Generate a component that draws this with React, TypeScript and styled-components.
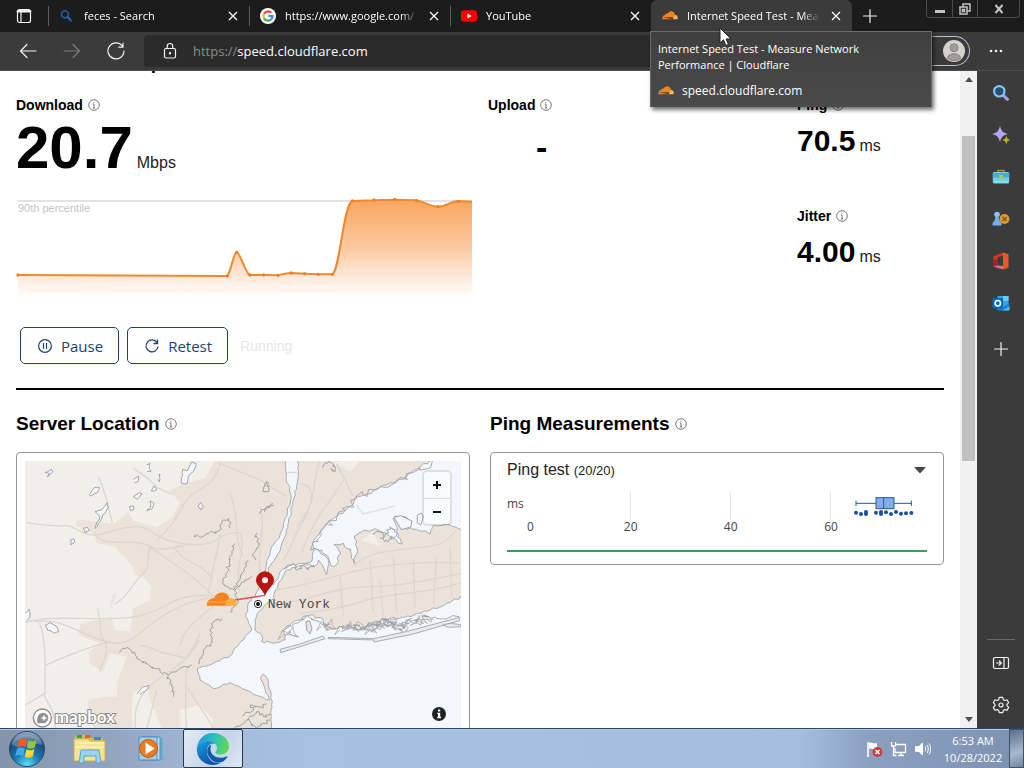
import React from "react";
import styled, { createGlobalStyle } from "styled-components";

const ui = `"Open Sans", "Noto Sans", sans-serif`;
const body = `"Liberation Sans", Arial, sans-serif`;

const GlobalStyle = createGlobalStyle`
  * { box-sizing: border-box; }
  body { margin: 0; background: #fff; font-family: ${body}; overflow: hidden; }
  button { font: inherit; color: inherit; background: none; border: 0; padding: 0; cursor: default; }
  h1, h2, h3, p { margin: 0; }
  svg { display: block; flex: none; }
`;

/* ---------- Window shell ---------- */

const Shell = styled.div`
  height: 100vh;
  display: flex;
  flex-direction: column;
`;

const TabStrip = styled.header`
  flex: none;
  height: 32px;
  display: flex;
  align-items: stretch;
  background: #1c1c1c;
  color: #fff;
  font-family: ${ui};
  font-size: 11px;
`;

const TabActions = styled.button`
  width: 48px;
  display: flex;
  align-items: center;
  justify-content: center;
`;

const Tabs = styled.div`
  display: flex;
  flex: 0 1 804px;
  min-width: 0;
`;

const TabItem = styled.div<{ $active?: boolean }>`
  position: relative;
  flex: 1 1 0;
  min-width: 0;
  display: flex;
  align-items: center;
  padding: 0 8px 0 10px;
  border-left: 1px solid ${(p) => (p.$active ? "#3b3b3b" : "transparent")};
  border-radius: ${(p) => (p.$active ? "6px 6px 0 0" : "0")};
  background: ${(p) => (p.$active ? "#3b3b3b" : "transparent")};

  &::before {
    content: "";
    position: absolute;
    left: -1px;
    top: 6px;
    height: 20px;
    width: 1px;
    background: ${(p) => (p.$active ? "transparent" : "#5a5a5a")};
  }
`;

const TabButton = styled.button`
  flex: 1;
  min-width: 0;
  display: flex;
  align-items: center;
  gap: 9px;
`;

const TabTitle = styled.span`
  flex: 1;
  text-align: left;
  white-space: nowrap;
  overflow: hidden;
  line-height: 20px;
  mask-image: linear-gradient(to right, #000 calc(100% - 18px), transparent);
`;

const CloseButton = styled.button`
  flex: none;
  width: 16px;
  height: 16px;
  margin-left: 8px;
  display: grid;
  place-items: center;
`;

const NewTab = styled.button`
  width: 36px;
  display: grid;
  place-items: center;
`;

const WindowControls = styled.div`
  display: flex;
  align-self: flex-start;
  height: 18px;
  margin: 0 4px 0 auto;
  border: 1px solid #4a4a4a;
  border-top: 0;
  border-radius: 0 0 4px 4px;
`;

const WindowButton = styled.button<{ $wide?: boolean }>`
  width: ${(p) => (p.$wide ? 42 : 25)}px;
  display: grid;
  place-items: center;
  & + & { border-left: 1px solid #4a4a4a; }
`;

const HoverCard = styled.div`
  position: absolute;
  z-index: 5;
  left: -2px;
  top: 31px;
  width: 282px;
  height: 76px;
  padding: 9px 7px;
  border: 1px solid #6c6c6c;
  border-bottom-color: #4a4a4a;
  background: linear-gradient(#3f3f3f, #4a4a4a);
  box-shadow: 2px 3px 4px rgba(0, 0, 0, 0.55);
  line-height: 16px;
`;

const HoverSite = styled.div`
  display: flex;
  align-items: center;
  gap: 8px;
  margin-top: 8px;
  font-size: 12px;
  line-height: 20px;
`;

const Cursor = styled.svg`
  position: absolute;
  z-index: 6;
  left: 67px;
  top: 27px;
`;

const Toolbar = styled.nav`
  flex: none;
  height: 39px;
  display: flex;
  align-items: center;
  padding: 0 6px;
  background: #3b3b3b;
  border-bottom: 1px solid #4e4e4e;
  font-family: ${ui};
`;

const NavButton = styled.button`
  width: 44px;
  height: 32px;
  display: grid;
  place-items: center;
`;

const AddressBar = styled.label`
  flex: 1;
  min-width: 0;
  height: 32px;
  margin-left: 6px;
  padding-left: 17px;
  display: flex;
  align-items: center;
  gap: 14px;
  border-radius: 4px 0 0 4px;
  background: #2b2b2b;
`;

const AddressField = styled.div`
  flex: 1;
  display: flex;
  font-size: 13px;
  line-height: 20px;
  color: #8c8c8c;
`;

const AddressInput = styled.input`
  flex: 1;
  min-width: 0;
  padding: 0;
  border: 0;
  outline: 0;
  background: none;
  color: #fff;
  font: inherit;
`;

const Profile = styled.button`
  width: 60px;
  height: 30px;
  display: flex;
  align-items: center;
  justify-content: flex-end;
  padding-right: 4px;
  border: 1px solid #b9c3d8;
  border-left: 0;
  border-radius: 0 15px 15px 0;
  background: #3b3b3b;
`;

const MenuButton = styled.button`
  width: 48px;
  height: 32px;
  padding-left: 4px;
  display: grid;
  place-items: center;
`;

const Main = styled.div`
  flex: 1;
  min-height: 0;
  display: flex;
`;

const Viewport = styled.main`
  flex: 1;
  min-width: 0;
  overflow: hidden;
  background: #fff;
  color: #000;
`;

const Page = styled.div`
  margin-top: -20px;
  padding: 0 16px;
`;

/* ---------- Page content ---------- */

const Heading = styled.h2`
  display: flex;
  align-items: center;
  gap: 5px;
  font-size: 19px;
  line-height: 24px;
  font-weight: 700;
  white-space: nowrap;
`;

const Metrics = styled.section`
  display: grid;
  grid-template-columns: 456fr 293fr 147fr;
  column-gap: 16px;
  margin-top: 20px;
`;

const Label = styled.h3`
  display: flex;
  align-items: center;
  gap: 5px;
  font-size: 14px;
  line-height: 20px;
  font-weight: 700;
`;

const BigValue = styled.p`
  font-size: 60px;
  line-height: 66px;
  font-weight: 700;
`;

const Unit = styled.span`
  margin-left: 4px;
  font-size: 16px;
  line-height: 16px;
  font-weight: 400;
  color: #222;
`;

const Value = styled.p`
  margin-top: 9px;
  font-size: 30px;
  line-height: 34px;
  font-weight: 700;
`;

const EmptyValue = styled.p`
  padding-left: 48px;
  margin-top: 12px;
  font-size: 34px;
  line-height: 40px;
  font-weight: 700;
`;

const SideMetrics = styled.div`
  display: flex;
  flex-direction: column;
  gap: 48px;
`;

const SpeedChart = styled.svg`
  width: 100%;
  height: auto;
  margin-top: 16px;
`;

const Controls = styled.div`
  display: flex;
  align-items: center;
  gap: 8px;
  padding-left: 4px;
  margin-top: 26px;
`;

const ActionButton = styled.button`
  height: 37px;
  padding: 0 15px 0 16px;
  display: flex;
  align-items: center;
  gap: 8px;
  border: 1px solid #1f4275;
  border-radius: 5px;
  color: #23436f;
  font-family: ${ui};
  font-size: 15px;
  line-height: 20px;
`;

const Status = styled.span`
  margin-left: 4px;
  font-size: 14px;
  color: #e6e6e6;
`;

const Rule = styled.hr`
  height: 2px;
  margin: 24px 0 22px;
  border: 0;
  background: #000;
`;

const Panels = styled.div`
  display: grid;
  grid-template-columns: 1fr 1fr;
  gap: 20px;
  align-items: start;
`;

const Card = styled.div<{ $pad: string }>`
  margin-top: 16px;
  padding: ${(p) => p.$pad};
  border: 1px solid #979797;
  border-radius: 4px;
`;

const MapFrame = styled.div`
  position: relative;
  height: 320px;
  overflow: hidden;
  background: #f3f6fa;
`;

const MapDrawing = styled.svg`
  width: 100%;
  height: auto;
`;

const ZoomGroup = styled.div`
  position: absolute;
  top: 11px;
  right: 11px;
  width: 26px;
  display: flex;
  flex-direction: column;
  border-radius: 3px;
  background: #fafbfc;
  box-shadow: 0 0 0 2px rgba(0, 0, 0, 0.09);
`;

const ZoomButton = styled.button`
  height: 26px;
  display: grid;
  place-items: center;
  & + & { border-top: 1px solid #ddd; }
`;

const MapInfo = styled.button`
  position: absolute;
  right: 15px;
  top: 246px;
`;

const TestToggle = styled.button`
  width: 100%;
  display: flex;
  align-items: center;
  justify-content: space-between;
  font-size: 16px;
  line-height: 20px;
  color: #222;

  small {
    font-size: 13px;
    line-height: 16px;
  }
`;

const BoxPlot = styled.svg`
  width: 100%;
  height: auto;
  margin-top: 4px;
`;

const Progress = styled.div`
  height: 2px;
  margin-top: 10px;
  background: #2ea355;
`;

/* ---------- Scroll bar and side bar ---------- */

const ScrollTrack = styled.div`
  flex: none;
  width: 17px;
  display: flex;
  flex-direction: column;
  align-items: center;
  background: #f1f1f1;
`;

const ScrollArrow = styled.button`
  width: 17px;
  height: 17px;
  display: grid;
  place-items: center;
`;

const ScrollPart = styled.div<{ $grow: number; $thumb?: boolean }>`
  flex: ${(p) => p.$grow} 0 0;
  width: 13px;
  background: ${(p) => (p.$thumb ? "#c1c1c1" : "transparent")};
`;

const SideBar = styled.aside`
  flex: none;
  width: 47px;
  display: flex;
  flex-direction: column;
  align-items: center;
  padding: 1px 0 2px;
  background: #3b3b3b;
`;

const SideButton = styled.button<{ $last?: boolean }>`
  width: 47px;
  height: 42px;
  margin-top: ${(p) => (p.$last ? 4 : 0)}px;
  display: grid;
  place-items: center;
`;

const SideDivider = styled.div`
  width: 28px;
  height: 1px;
  margin: auto 0 2px;
  background: #6a6a6a;
`;

/* ---------- Task bar ---------- */

const TaskBar = styled.footer`
  flex: none;
  height: 40px;
  display: flex;
  align-items: stretch;
  border-top: 1px solid #2c4668;
  background: linear-gradient(to right, #8494ab 0, #93a6c2 12%, #a3b9d8 20%, #a9c0e0 30%, #a6bede 78%, #8ba0bf 85%, #7d92b0 100%);
  box-shadow: inset 0 1px 0 #b7cae4;
`;

const TaskButton = styled.button<{ $open?: boolean }>`
  width: ${(p) => (p.$open ? 60 : 62)}px;
  display: grid;
  place-items: center;
  border: ${(p) => (p.$open ? "1px solid #24384f" : "0")};
  border-radius: 2px;
  background: ${(p) => (p.$open ? "linear-gradient(120deg, #e3ebf5, #c3d3e8 60%, #dfe8f3)" : "none")};
`;

const StartButton = styled.button`
  width: 54px;
  margin-right: 5px;
  display: grid;
  place-items: center;
`;

const Tray = styled.div`
  margin-left: auto;
  display: flex;
  align-items: center;
  gap: 7px;
`;

const Clock = styled.time`
  width: 64px;
  margin: 1px 4px 0 3px;
  text-align: center;
  font-family: ${ui};
  font-size: 11px;
  line-height: 17px;
  color: #fff;
  white-space: pre-line;
`;

const ShowDesktop = styled.button`
  width: 15px;
  border: 1px solid #3e526d;
  background: linear-gradient(160deg, #5c6e87, #a9b9cd 60%, #71849f);
`;

/* ---------- Icons ---------- */

const CloudIcon = () => (
  <svg width="16" height="16" viewBox="0 0 32 32">
    <path fill="#f0831e" d="M21.6 22.5 22 21c.4-1.4-.6-2.3-2-2.4L1.2 18.4c.4-2.8 2.6-4.6 5.2-4.6.2-2.4 2.8-3.8 5-2.5C13 7.3 16.5 6 19 6.300c4 .4 6.600 3.700 7.100 7.500l-2.700 8.700H.6c-.4-1.400-.2-3 .6-4.100z" />
    <path fill="#fbb45c" d="M26.100 13.800c3.300 0 5.500 2.600 5.500 5.700 0 1-.2 2.100-.5 3h-8.600c1.200-2.200.7-5 2.200-8.200z" />
  </svg>
);

const Close = () => (
  <svg width="10" height="10" viewBox="0 0 10 10" stroke="#fff" strokeWidth="1.300">
    <path d="M1 1l8 8M9 1L1 9" />
  </svg>
);

const Info = () => (
  <svg width="12" height="12" viewBox="0 0 12 12" fill="none" stroke="#555" strokeWidth=".8">
    <circle cx="6" cy="6" r="5.300" />
    <path d="M6 5v4M4.800 5H6M4.800 9h2.400M6 2.700v1.100" />
  </svg>
);

const BingSearch = () => (
  <svg width="16" height="16" viewBox="0 0 16 16" fill="none">
    <circle cx="6" cy="6.300" r="3.500" stroke="#1d5a9c" strokeWidth="1.700" />
    <path d="M8.700 9l3.300 3.600" stroke="#1d6fc0" strokeWidth="2" strokeLinecap="round" />
  </svg>
);

const GoogleIcon = () => (
  <svg width="16" height="16" viewBox="0 0 16 16" fill="none">
    <circle cx="8" cy="8" r="8" fill="#fff" />
    <g strokeWidth="2.200">
      <path d="M11.300 4.800A4.600 4.600 0 0 0 4 5.800" stroke="#ea4335" />
      <path d="M4 5.800a4.600 4.600 0 0 0 0 4.400" stroke="#fbbc05" />
      <path d="M4 10.200a4.600 4.600 0 0 0 7 1.300" stroke="#34a853" />
      <path d="M11 11.500A4.600 4.600 0 0 0 12.600 8H8.300" stroke="#4285f4" />
    </g>
  </svg>
);

const YouTubeIcon = () => (
  <svg width="16" height="16" viewBox="0 0 16 16">
    <rect y="2.300" width="16" height="11.400" rx="3" fill="#f00" />
    <path d="M6.400 5.500v5l4.300-2.500z" fill="#fff" />
  </svg>
);

const ToolIcon = ({ kind }: { kind: string }) => (
  <svg width="18" height="18" viewBox="0 0 18 18" fill="none" stroke={kind === "forward" ? "#7b7b7b" : "#f2f2f2"} strokeWidth="1.200" strokeLinecap="round" strokeLinejoin="round">
    {kind === "back" && <path d="M17 9H1.500M8 2.500L1.500 9 8 15.500" />}
    {kind === "forward" && <path d="M1 9h15.500M10 2.500L16.500 9 10 15.500" />}
    {kind === "refresh" && <path d="M15.500 4.200A8 8 0 1 0 17 9M16 1v4.200h-4.200" />}
    {kind === "lock" && <><rect x="3.500" y="6.500" width="11" height="9.500" rx="1.500" /><path d="M6.200 6.500V4.300a2.800 2.800 0 0 1 5.600 0v2.200" /><circle cx="9" cy="11.300" r=".6" fill="#fff" /></>}
    {kind === "tabs" && <><rect x="2.500" y="2.500" width="13" height="13" rx="2" /><path d="M3 4.200h12" strokeWidth="2.600" /><path d="M6 4v11.500" /></>}
    {kind === "plus" && <path d="M9 2.500v13M2.500 9h13" />}
    {kind === "panel" && <><rect x="1.500" y="3.500" width="15" height="11" rx="1.500" /><path d="M12 3.500v11M4.500 9H9M7.300 7L9.300 9l-2 2" /></>}
    {kind === "gear" && <><circle cx="9" cy="9" r="2" /><path d="M7.300 1.400h3.400l.6 2.300 1.400.8 2.300-.7 1.700 2.900-1.700 1.700v1.300l1.700 1.700-1.700 2.900-2.300-.7-1.400.8-.6 2.300H7.300l-.6-2.300-1.400-.8-2.300.7-1.700-2.900L3 9.700V8.400L1.300 6.700 3 3.800l2.300.7 1.400-.8z" /></>}
  </svg>
);

const SideIcon = ({ kind }: { kind: string }) => (
  <svg width="18" height="18" viewBox="0 0 18 18">
    {kind === "search" && <><path d="M11.300 11.300l4.200 4" stroke="#a99af0" strokeWidth="3" strokeLinecap="round" /><circle cx="7.300" cy="7.300" r="5.200" fill="#26506c" stroke="#85c6f2" strokeWidth="2.200" /></>}
    {kind === "discover" && <><path d="M8 0c1.500 5 2.500 6.500 8 8-5.500 1.500-6.500 3-8 8-1.500-5-2.500-6.500-8-8 5.500-1.500 6.500-3 8-8z" fill="#b7a1f5" /><path d="M14.300 10.500c.5 2.300 1 3 3.200 3.500-2.200.5-2.700 1.200-3.200 3.500-.5-2.300-1-3-3.200-3.500 2.200-.5 2.700-1.200 3.200-3.500z" fill="#c9b82c" stroke="#c9b82c" strokeWidth=".6" /></>}
    {kind === "tools" && <><path d="M6 4.500v-2h6v2" fill="none" stroke="#a8862d" strokeWidth="1.500" /><rect x=".8" y="4" width="16.400" height="11.500" rx="1.500" fill="#6fd0e8" /><path d="M.8 5h16.400v4.500H.8z" fill="#48acd0" /><path d="M2 13h14v1.500H2z" fill="#8ae4ee" /><rect x="7.300" y="7" width="3.800" height="4" rx=".6" fill="#b9c24e" /></>}
    {kind === "games" && <><circle cx="12.500" cy="9" r="5" fill="#d99a2b" /><path d="M10.500 7l4 4M14.500 7l-4 4" stroke="#8a5410" strokeWidth="1.200" /><circle cx="5" cy="4.600" r="2.800" fill="#8ec4f5" /><path d="M3.300 6.500h3.400c0 3 .8 4.500 2.800 6.500v2.500H.5V13c2-2 2.800-3.500 2.800-6.500z" fill="#73aef0" /></>}
    {kind === "office" && <><path d="M11 .5l5.500 1.700v13.600L11 17.500z" fill="#f0591d" /><path d="M11 .5v3.200L5.600 5.200v8L1.500 14.700V4.300z" fill="#d8391e" /><path d="M1.500 14.700l4.100-1.500L11 14v3.500z" fill="#dd6d86" /><path d="M1.500 8v6.700l4.100-1.500V7z" fill="#a22434" /></>}
    {kind === "outlook" && <><path d="M5.500 2h11v13h-11z" fill="#2fa5e8" /><path d="M11 2h5.500v5H11z" fill="#63ccf5" /><path d="M5.500 10l6 3 6-4v6.500a1 1 0 0 1-1 1h-11z" fill="#1b80cd" /><path d="M10 16.500l7.500-4v3a1 1 0 0 1-1 1z" fill="#4abdf0" /><rect x=".5" y="4" width="10.500" height="10.500" rx="1" fill="#0967b8" /><circle cx="5.800" cy="9.200" r="2.700" fill="none" stroke="#fff" strokeWidth="1.600" /></>}
  </svg>
);

const Avatar = () => (
  <svg width="22" height="22" viewBox="0 0 22 22">
    <circle cx="11" cy="11" r="11" fill="#d4d2cf" />
    <circle cx="11" cy="7.800" r="4" fill="#a09d99" stroke="#77736f" strokeWidth=".7" />
    <path d="M4.500 18.500c-.5-6.500 13.500-6.500 13 0a11 11 0 0 1-13 0z" fill="#a09d99" stroke="#77736f" strokeWidth=".7" />
  </svg>
);

const StartOrb = () => (
  <svg width="38" height="38" viewBox="0 0 38 38">
    <defs>
      <radialGradient id="orb" cx=".5" cy=".95" r=".95">
        <stop offset="0" stopColor="#5fe0f5" />
        <stop offset=".4" stopColor="#1878ae" />
        <stop offset=".75" stopColor="#1d4a79" />
        <stop offset="1" stopColor="#a3bbd0" />
      </radialGradient>
    </defs>
    <circle cx="19" cy="19" r="17.500" fill="url(#orb)" stroke="#2a4766" />
    <path d="M4 15C6 1 32 1 34 15c-9-4-20 5-30 0z" fill="#fff" opacity=".25" />
    <path d="M11 10c3-2 5-2 8-.3l-1.700 7.500c-3-1.500-5-1.400-7.900.2z" fill="#ee5a24" />
    <path d="M20.300 10.300c3 1.500 5 1.400 8.300-.3l-1.800 7.500c-3 1.700-5 1.600-8 .2z" fill="#8cc63f" />
    <path d="M9 18.800c3-1.700 5-1.600 7.900-.2l-1.800 7.600c-3-1.600-5-1.500-8 .2z" fill="#3fa9f5" />
    <path d="M18.400 19.200c3 1.500 5 1.400 8-.2l-1.700 7.500c-3 1.700-5 1.600-8 .2z" fill="#ffd33c" />
  </svg>
);

const ExplorerIcon = () => (
  <svg width="34" height="32" viewBox="0 0 34 32">
    <path d="M2 4l2-2h11l2 3h13v22H2z" fill="#d9bd58" />
    <path d="M4 2h5v3H4z" fill="#3aa23d" /><path d="M12 2h5v3h-5z" fill="#d8603a" /><path d="M21 4h7v3h-7z" fill="#4286c9" />
    <path d="M1 6h14l2 2h15v20H1z" fill="#f5e292" stroke="#c7a945" strokeWidth=".8" />
    <path d="M2 10h29M2 14h29" stroke="#fff4bd" strokeWidth="1.500" />
    <path d="M6 30l2-13h18l2 13h-5v-7H11v7z" fill="#9bd4ee" stroke="#5aa3cf" strokeWidth="1" />
  </svg>
);

const MediaIcon = () => (
  <svg width="30" height="28" viewBox="0 0 30 28">
    <path d="M10 3h16v20l2 2-16 1z" fill="#6fabcc" />
    <path d="M6 2h17v23H6z" fill="#bcdcf0" stroke="#4a91ba" />
    <path d="M2 2h18v23H2z" fill="#a5cde8" stroke="#4a91ba" />
    <circle cx="11.500" cy="13.500" r="9" fill="#ec7a23" stroke="#c9570f" />
    <path d="M8.500 7.500v12l9-6z" fill="#fff" />
  </svg>
);

const EdgeIcon = () => (
  <svg width="34" height="34" viewBox="0 0 34 34">
    <defs>
      <linearGradient id="edgeTop" x1="0" y1=".3" x2="1" y2=".5">
        <stop offset="0" stopColor="#2296d6" />
        <stop offset=".5" stopColor="#2bc0c0" />
        <stop offset="1" stopColor="#62d84e" />
      </linearGradient>
      <linearGradient id="edgeLeft" x1="0" y1="0" x2=".6" y2="1">
        <stop offset="0" stopColor="#1b9de2" />
        <stop offset="1" stopColor="#0b4fa4" />
      </linearGradient>
    </defs>
    <path d="M1 16C2 7 8.500 1 17 1c9.500 0 16 6.500 16 13.500 0 5-4 8-8.500 8-4 0-5.500-1.500-5-2.500 1-1.500 1.500-2.500 1.500-4C21 12 17 9 12 9 6 9 2 12 1 16z" fill="url(#edgeTop)" />
    <path d="M1 16c1-4 5-7 11-7 3 0 6 1 7.500 3-5-2-8.500 2-8.500 7 0 7 5 13 13 12-2 1.300-4.500 2-7 2C7 33 0 25 1 16z" fill="url(#edgeLeft)" />
    <path d="M15.500 12.500C11 14 10 20 13 25s9 7 13 5c2.500-1.300 4.300-3.200 5.300-5 .4-.8-.3-1-1-.6C23 28 15 24 14.500 18c-.2-2 .3-4 1-5.500z" fill="#0d5ca9" />
  </svg>
);

const FlagIcon = () => (
  <svg width="17" height="18" viewBox="0 0 17 18">
    <path d="M2 17V2" stroke="#fff" strokeWidth="1.600" />
    <path d="M3 3c3-1.500 4 1.500 8 0v6c-4 1.500-5-1.500-8 0z" fill="#fff" />
    <circle cx="11.500" cy="12" r="5" fill="#d23b3b" />
    <path d="M9.500 10l4 4M13.500 10l-4 4" stroke="#fff" strokeWidth="1.600" />
  </svg>
);

const NetworkIcon = () => (
  <svg width="17" height="18" viewBox="0 0 17 18" fill="none" stroke="#fff" strokeWidth="1.300">
    <path d="M6 4.500h9.500v8H5V8M8 15.500h6M11 12.500v3" />
    <path d="M1.500 2v4h4V2M3.500 6v9.500h3" />
  </svg>
);

const SpeakerIcon = () => (
  <svg width="17" height="18" viewBox="0 0 17 18" fill="none" stroke="#fff" strokeWidth="1">
    <path d="M1.500 6.500h3v5h-3zM5.500 6l3-3v12l-3-3z" fill="#fff" />
    <path d="M11 6.500c1 1.500 1 3.500 0 5M13 5c1.800 2.500 1.800 5.500 0 8M15 3.500c2.200 3.500 2.200 7.500 0 11" />
  </svg>
);

/* ---------- Map drawing ---------- */

type Point = [number, number];

const toPoints = (s: string): Point[] =>
  s.trim().split(/\s+/).map((p) => p.split(",").map(Number) as Point);

/* Adds repeatable small bends between the points of a coast line. */
const roughen = (s: string, amount: number, step = 9) => {
  const pts = toPoints(s);
  let seed = 7;
  const rnd = () => {
    seed = (seed * 16807) % 2147483647;
    return seed / 2147483647 - 0.5;
  };
  const out: Point[] = [pts[0]];
  for (let i = 1; i < pts.length; i++) {
    const [ax, ay] = pts[i - 1];
    const [bx, by] = pts[i];
    const steps = Math.max(1, Math.round(Math.hypot(bx - ax, by - ay) / step));
    for (let k = 1; k <= steps; k++) {
      const t = k / steps;
      const a = k === steps ? 0 : amount;
      out.push([ax + (bx - ax) * t + rnd() * a, ay + (by - ay) * t + rnd() * a]);
    }
  }
  return "M" + out.map(([x, y]) => `${x.toFixed(1)} ${y.toFixed(1)}`).join("L");
};

const westLand =
  "60,170 855,170 858,240 870,262 872,300 862,340 840,405 812,450 798,500 778,560 768,580 745,608 738,650 755,690 722,725 690,768 640,790 592,806 600,840 640,866 690,848 720,862 770,886 808,900 796,870 782,832 790,822 800,832 808,866 817,905 812,940 815,1020 60,1020 60,170";
const northLand =
  "895,170 893,240 880,300 870,350 855,410 835,460 805,505 800,540 820,555 838,520 870,495 905,490 935,485 942,450 937,430 960,395 990,362 1012,348 1060,312 1066,292 1110,282 1150,256 1210,238 1240,212 1290,183 1300,170 895,170";
const longIsland =
  "822,590 838,545 860,510 895,497 925,492 942,500 956,480 972,505 980,524 987,492 978,470 940,445 965,450 1000,500 1010,494 1022,462 1002,434 1030,430 1052,448 1063,490 1070,440 1064,408 1092,390 1130,388 1160,402 1195,430 1207,432 1190,395 1182,352 1220,352 1235,370 1215,384 1250,388 1290,402 1300,376 1340,372 1390,388 1390,588 1350,608 1290,630 1230,650 1170,655 1130,665 1090,690 1030,680 980,692 970,660 930,645 880,665 850,690 855,720 820,730 785,725 785,705 765,690 765,660 772,640 800,612 822,590";

const ruralAreas = [
  "60,170 650,170 615,235 560,250 505,272 540,305 518,352 470,382 400,362 385,335 340,372 232,358 228,378 285,404 290,430 345,440 392,492 405,525 430,530 455,560 450,600 400,625 390,695 345,690 330,640 350,575 335,590 330,650 240,672 235,705 300,730 265,755 268,790 310,815 330,760 380,770 350,850 352,890 310,890 262,900 270,960 300,1020 60,1020",
  "400,880 440,850 450,900 500,1020 400,1020 395,930",
  "540,930 600,915 640,960 620,1020 540,1020",
  "1000,185 1080,183 1050,215",
  "1085,420 1120,395 1140,440",
];

const roads = [
  "M78 368C130 375 170 380 195 377S240 402 275 405 340 385 400 380 450 420 560 432 640 395 720 398",
  "M280 400C320 450 380 410 440 435S500 440 560 435",
  "M400 205L440 232 470 262 515 283M295 230C320 280 325 330 338 370",
  "M660 190C640 270 590 260 560 300S530 370 470 420M660 190L720 215 780 240 860 290",
  "M450 440C440 480 450 510 425 525 390 560 385 590 345 612",
  "M75 668C130 650 200 655 290 656S430 655 500 615 600 590 690 585",
  "M105 665C180 655 220 690 300 720 400 750 400 700 500 640L560 610 640 590",
  "M292 625C310 690 290 700 318 730 325 780 300 790 300 815",
  "M135 797C200 765 250 750 318 727M118 668C140 720 135 800 135 880L60 925M130 880L160 940 170 1000",
  "M440 435C540 500 620 560 650 600M520 440C560 500 600 480 640 540M660 400C655 460 640 480 625 580",
  "M540 740C545 690 600 650 640 620M418 740C440 730 470 760 520 765L560 775 600 720",
  "M410 1000C400 950 400 900 460 850S560 800 600 700M560 1000C555 930 555 880 560 800M560 860C600 920 620 950 650 1000M440 990L470 870",
  "M720 400C740 440 700 520 720 580M690 280C720 350 700 420 730 470M780 320C800 390 770 430 780 520",
  "M900 250C960 260 930 330 900 380S880 440 850 480M960 183C930 250 960 300 890 380M1010 190L1060 290M1030 240C1000 300 950 330 905 460",
  "M830 570C900 560 1000 530 1060 515S1250 480 1390 490M840 610C940 600 1000 560 1100 560S1280 540 1390 520",
  "M1020 530L1030 650M1110 480L1120 640M1140 540L1150 650M1180 470L1190 640M1240 480L1245 620M1310 470L1300 610M1350 440L1355 590",
  "M900 640C1000 630 1040 620 1100 600S1300 580 1390 545M1060 500C1100 450 1200 450 1280 440S1350 400 1370 390",
];

const lakes = [
  "135,218 155,208 158,216 142,231 148,220 135,218", "268,285 285,262 298,262 292,278 272,288 268,285",
  "285,385 300,350 285,335 305,330 322,308 325,322 308,345 300,365 285,385", "250,385 262,382 268,390 255,398 250,385",
  "212,420 222,416 224,426 212,434 212,420", "400,290 418,278 426,282 412,298 400,290", "440,330 452,322 450,303 462,310 455,328 440,333",
  "440,195 450,190 448,205 453,214 441,214", "476,225 480,222 478,245 474,238", "455,274 462,258 470,270 455,274",
  "545,250 548,208 562,212 575,186 588,190 580,215 568,225 562,250 545,250", "400,238 416,228 414,245 404,248",
  "136,675 150,668 168,678 176,695 162,700 142,690 136,675", "594,318 602,308 610,320 602,330 594,318",
  "412,882 430,860 446,856 440,870 420,884", "388,320 400,318 402,328 392,332 388,320", "76,640 88,628 90,650 80,662",
];

const creeks = [
  "585,403 600,412 620,400 655,395 665,365 685,355 690,385", "360,755 380,742 395,752 410,775 450,798 480,815 505,825 540,805 575,795",
  "505,825 515,860 520,890", "600,790 610,750 632,730 635,670 665,655", "705,430 690,470 680,520 668,550 690,568 710,560",
  "770,400 775,440 760,460 765,480", "745,480 725,520 715,545 705,570 712,610 690,635", "720,560 735,540 755,530",
  "795,335 810,318 822,315", "780,340 800,320 818,310", "970,200 985,185 1000,192 1005,215 990,205", "795,275 793,252 800,245 806,275 795,275",
  "1120,400 1145,395 1150,415 1170,380 1190,400 1165,425 1140,415", "855,505 880,490 890,510 910,495 925,510 940,495",
  "730,945 760,930 750,915 780,920 800,912", "745,960 770,935 790,950 810,940", "700,990 740,960 770,985 810,960",
];

const marshes = [
  "1020,690 1050,678 1080,685", "1075,672 1110,688 1140,672", "1110,690 1160,662 1190,682", "1160,664 1200,688 1225,668",
  "1225,672 1262,658 1290,652", "850,705 868,692 884,706", "965,678 985,668 995,682",
];

const MapArt = () => (
  <MapDrawing viewBox="75 183 1308 960" role="img" aria-label="Map of New York">
    <rect x="60" y="170" width="1340" height="990" fill="#f3f6fb" />
    <path d={roughen(westLand, 5)} fill="#ebe3da" />
    <path d={roughen(northLand, 6)} fill="#ebe3da" />
    <path d={roughen(longIsland, 8)} fill="#ebe3da" />
    {ruralAreas.map((a) => <polygon key={a} points={a} fill="#f2efeb" />)}
    <g fill="none" stroke="#dcd6d0" strokeWidth="4" strokeLinejoin="round">
      {roads.map((d) => <path key={d} d={d} />)}
    </g>
    <path d="M1070 315L1090 342 1185 318" fill="none" stroke="#dfe1e4" strokeWidth="4" />
    <g fill="none" stroke="#9b9fa5" strokeWidth="2.500" strokeLinejoin="round">
      <path d={roughen(westLand, 5)} />
      <path d={roughen(northLand, 6)} />
      <path d={roughen(longIsland, 8)} />
      <path d={roughen("940,448 962,392 1012,345 1058,315 1070,288 1150,262 1240,218 1298,183", 24)} />
      <path d={roughen("850,692 880,672 925,650 970,672 985,690", 18)} />
      <path d={roughen("1030,675 1080,690 1130,665 1190,675 1250,668 1310,655 1378,650", 22)} />
      {marshes.map((m) => <path key={m} d={roughen(m, 36, 3)} strokeWidth="2" />)}
      <path d="M858 217H890" stroke="#c9cdd3" />
    </g>
    <g fill="#e9eaeb" stroke="#9b9fa5" strokeWidth="2.500" strokeLinejoin="round">
      <path d="M840 748L900 732 968 708 975 716 900 740 842 758z" />
      <path d="M985 712L1120 716 1230 692 1378 652V662L1240 702 1122 726V720L985 716z" />
      <path d="M1328 675L1350 670 1383 674V680L1345 682z" />
    </g>
    <g fill="#f4f6f9" stroke="#8f959c" strokeWidth="2.500" strokeLinejoin="round">
      {lakes.map((l) => <path key={l} d={roughen(l, 5)} />)}
      <path d="M918 665l10 -3 8 22 -6 18 -10 -12z" fill="#ebe3da" />
      <path d="M1182 352l20 -5 34 16 -4 18 -28 8zM1252 345l12 -6 6 12 -8 24 -10 -6z" fill="#f3f6fb" />
    </g>
    <g fill="none" stroke="#8f959c" strokeWidth="2.500" strokeLinejoin="round">
      {creeks.map((c) => <path key={c} d={roughen(c, 12, 6)} />)}
    </g>
    <path d="M705 600L795 586" stroke="#d9534f" strokeWidth="4" />
    <path d="M620 617C620 602 630 596 642 594 652 572 682 572 688 594L692 617z" fill="#f6821f" />
    <path d="M688 594C706 594 713 606 710 617H672C680 610 682 598 688 594z" fill="#fbad41" />
    <path d="M625 606H676L688 600" fill="none" stroke="#ffc48a" strokeWidth="2" />
    <circle cx="774" cy="612" r="11" fill="#fff" stroke="#333" strokeWidth="3" />
    <circle cx="774" cy="612" r="6" fill="#111" />
    <path d="M795 587C785 565 768 556 768 541A27 27 0 0 1 822 541C822 556 805 565 795 587z" fill="#b91414" />
    <circle cx="795" cy="541" r="9" fill="#fff" />
    <text x="803" y="624" fontFamily="'Liberation Mono', monospace" fontSize="39" fill="#4a4a4a">New York</text>
    <circle cx="127" cy="954" r="27" fill="#fff" stroke="#8a8a8a" strokeWidth="4" />
    <path d="M112 970C110 950 116 938 130 938A16 16 0 1 1 128 970z" fill="#8f8f8f" />
    <path d="M132 944l3 7 7 3-7 3-3 7-3-7-7-3 7-3z" fill="#fff" />
    <text x="164" y="968" fontFamily="Lato, sans-serif" fontWeight="700" fontSize="51" fill="#fff" stroke="#8a8a8a" strokeWidth="6" paintOrder="stroke">mapbox</text>
  </MapDrawing>
);

const downloadLine =
  "M54 555L682 558C695 540 700 487 710 487C722 487 735 552 750 555L790 555L834 556C850 552 860 549 874 549L914 551L955 553L997 553C1020 540 1030 340 1057 333L1122 331Q1184 327 1249 331C1280 338 1290 350 1314 350C1340 350 1350 333 1375 333L1416 335";
const downloadDots = "54,555 682,558 710,487 750,555 791,555 834,556 874,549 914,551 955,553 997,553 1057,333 1122,330 1184,328 1249,332 1314,350 1375,334";
const pingDots = "1158,338 1173,342 1188,336 1188,342 1218,338 1233,336 1233,342 1248,337 1263,342 1278,336 1293,341 1308,340 1324,339";

const tabs = [
  { title: "feces - Search", icon: <BingSearch /> },
  { title: "https://www.google.com/", icon: <GoogleIcon /> },
  { title: "YouTube", icon: <YouTubeIcon /> },
  { title: "Internet Speed Test - Measure Network", icon: <CloudIcon />, active: true },
];

export default function App() {
  return (
    <Shell>
      <GlobalStyle />
      <TabStrip>
        <TabActions aria-label="Tab actions"><ToolIcon kind="tabs" /></TabActions>
        <Tabs>
          {tabs.map((t) => (
            <TabItem key={t.title} $active={t.active}>
              <TabButton>{t.icon}<TabTitle>{t.title}</TabTitle></TabButton>
              <CloseButton aria-label="Close tab"><Close /></CloseButton>
              {t.active && (
                <>
                  <HoverCard>
                    Internet Speed Test - Measure Network<br />Performance | Cloudflare
                    <HoverSite><CloudIcon />speed.cloudflare.com</HoverSite>
                  </HoverCard>
                  <Cursor width="13" height="20" viewBox="0 0 13 20">
                    <path d="M1 1v15l3.500-3.200 2.300 5.700 2.700-1.100-2.400-5.500H12z" fill="#fff" stroke="#222" />
                  </Cursor>
                </>
              )}
            </TabItem>
          ))}
        </Tabs>
        <NewTab aria-label="New tab"><ToolIcon kind="plus" /></NewTab>
        <WindowControls>
          <WindowButton aria-label="Minimize">
            <svg width="12" height="12" viewBox="0 0 12 12"><path d="M1 7h10v3H1z" fill="#c4c4c4" /></svg>
          </WindowButton>
          <WindowButton aria-label="Restore">
            <svg width="12" height="12" viewBox="0 0 12 12" fill="none" stroke="#c4c4c4" strokeWidth="1.500"><path d="M1 4h7v7H1zM4 4V1h7v7H8M3.500 6.500h2v2h-2z" /></svg>
          </WindowButton>
          <WindowButton $wide aria-label="Close window">
            <svg width="10" height="10" viewBox="0 0 10 10" stroke="#c4c4c4" strokeWidth="2"><path d="M1.500 1l7 8M8.500 1l-7 8" /></svg>
          </WindowButton>
        </WindowControls>
      </TabStrip>

      <Toolbar>
        <NavButton aria-label="Back"><ToolIcon kind="back" /></NavButton>
        <NavButton aria-label="Forward"><ToolIcon kind="forward" /></NavButton>
        <NavButton aria-label="Refresh"><ToolIcon kind="refresh" /></NavButton>
        <AddressBar>
          <ToolIcon kind="lock" />
          <AddressField>
            <span>https://</span>
            <AddressInput aria-label="Address" defaultValue="speed.cloudflare.com" />
          </AddressField>
        </AddressBar>
        <Profile aria-label="Profile"><Avatar /></Profile>
        <MenuButton aria-label="Settings and more">
          <svg width="14" height="4" viewBox="0 0 14 4" fill="#f0f0f0"><circle cx="2" cy="2" r="1.300" /><circle cx="7" cy="2" r="1.300" /><circle cx="12" cy="2" r="1.300" /></svg>
        </MenuButton>
      </Toolbar>

      <Main>
        <Viewport>
          <Page>
            <Heading>Your Internet Speed</Heading>
            <Metrics>
              <div>
                <Label>Download <Info /></Label>
                <BigValue>20.7<Unit>Mbps</Unit></BigValue>
                <SpeedChart viewBox="48 321 1368 312" role="img" aria-label="Download speed over time">
                  <defs>
                    <linearGradient id="fill" gradientUnits="userSpaceOnUse" x1="0" y1="333" x2="0" y2="625">
                      <stop offset="0" stopColor="#f9a661" />
                      <stop offset=".5" stopColor="#fbcba3" />
                      <stop offset=".8" stopColor="#fdebdf" />
                      <stop offset="1" stopColor="#fff" />
                    </linearGradient>
                  </defs>
                  <path d="M54 333H1416" stroke="#d8d8d8" strokeWidth="5" />
                  <text x="54" y="367" fontSize="33" fontFamily={body} fill="#c4c4c4">90th percentile</text>
                  <path d={downloadLine + "V625H54Z"} fill="url(#fill)" />
                  <path d={downloadLine} fill="none" stroke="#ee8a2c" strokeWidth="6" />
                  {toPoints(downloadDots).map(([x, y]) => <circle key={x} cx={x} cy={y} r="5" fill="#e8832a" />)}
                </SpeedChart>
              </div>
              <div>
                <Label>Upload <Info /></Label>
                <EmptyValue>-</EmptyValue>
              </div>
              <SideMetrics>
                <div>
                  <Label>Ping <Info /></Label>
                  <Value>70.5<Unit>ms</Unit></Value>
                </div>
                <div>
                  <Label>Jitter <Info /></Label>
                  <Value>4.00<Unit>ms</Unit></Value>
                </div>
              </SideMetrics>
            </Metrics>

            <Controls>
              <ActionButton>
                <svg width="16" height="16" viewBox="0 0 16 16" fill="none" stroke="#23436f" strokeWidth="1.200"><circle cx="8" cy="8" r="6.400" /><path d="M6.500 5v6M9.500 5v6" /></svg>
                Pause
              </ActionButton>
              <ActionButton>
                <svg width="16" height="16" viewBox="0 0 16 16" fill="none" stroke="#23436f" strokeWidth="1.300"><path d="M13 4.500A6 6 0 1 0 14 8.500M13.500 1.500v4h-4" /></svg>
                Retest
              </ActionButton>
              <Status>Running</Status>
            </Controls>

            <Rule />

            <Panels>
              <section>
                <Heading>Server Location <Info /></Heading>
                <Card $pad="8px">
                  <MapFrame>
                    <MapArt />
                    <ZoomGroup>
                      <ZoomButton aria-label="Zoom in">
                        <svg width="10" height="10" viewBox="0 0 10 10" stroke="#111" strokeWidth="2"><path d="M5 1v8M1 5h8" /></svg>
                      </ZoomButton>
                      <ZoomButton aria-label="Zoom out">
                        <svg width="10" height="10" viewBox="0 0 10 10" stroke="#111" strokeWidth="2"><path d="M1 5h8" /></svg>
                      </ZoomButton>
                    </ZoomGroup>
                    <MapInfo aria-label="Attribution">
                      <svg width="14" height="14" viewBox="0 0 14 14"><circle cx="7" cy="7" r="7" fill="#222" /><path d="M6 2.500h2.200v2H6zM5.300 5.700h2.900v4.100h.8v1.400H5.200V9.800H6V7.100h-.7z" fill="#fff" /></svg>
                    </MapInfo>
                  </MapFrame>
                </Card>
              </section>
              <section>
                <Heading>Ping Measurements <Info /></Heading>
                <Card $pad="7px 16px 12px">
                  <TestToggle>
                    <span>Ping test <small>(20/20)</small></span>
                    <svg width="14" height="8" viewBox="0 0 14 8"><path d="M1 1h12L7 7.500z" fill="#444" /></svg>
                  </TestToggle>
                  <BoxPlot viewBox="111 252 1260 168" role="img" aria-label="Ping distribution in milliseconds">
                    <path d="M481 276V360M781 276V360M1081 276V360" stroke="#e4e4e4" strokeWidth="3" />
                    <g fontFamily={ui} fontSize="36" fill="#444">
                      <text x="111" y="324">ms</text>
                      <g textAnchor="middle">
                        <text x="181" y="393">0</text>
                        <text x="482" y="393">20</text>
                        <text x="782" y="393">40</text>
                        <text x="1083" y="393">60</text>
                      </g>
                    </g>
                    <path d="M1158 310H1324M1158 302V318M1324 302V318" stroke="#2458a8" strokeWidth="3" />
                    <rect x="1218" y="293" width="54" height="33" fill="#82aee8" stroke="#2458a8" strokeWidth="3" />
                    <path d="M1241 293V326" stroke="#2458a8" strokeWidth="3" />
                    {toPoints(pingDots).map(([x, y]) => <circle key={`${x}-${y}`} cx={x} cy={y} r="6" fill="#1c4f9e" />)}
                  </BoxPlot>
                  <Progress />
                </Card>
              </section>
            </Panels>
          </Page>
        </Viewport>

        <ScrollTrack>
          <ScrollArrow aria-label="Scroll up"><svg width="8" height="5" viewBox="0 0 8 5"><path d="M0 5h8L4 0z" fill="#505050" /></svg></ScrollArrow>
          <ScrollPart $grow={48} />
          <ScrollPart $grow={325} $thumb />
          <ScrollPart $grow={250} />
          <ScrollArrow aria-label="Scroll down"><svg width="8" height="5" viewBox="0 0 8 5"><path d="M0 0h8L4 5z" fill="#505050" /></svg></ScrollArrow>
        </ScrollTrack>

        <SideBar>
          {["search", "discover", "tools", "games", "office", "outlook"].map((k) => (
            <SideButton key={k} aria-label={k}><SideIcon kind={k} /></SideButton>
          ))}
          <SideButton $last aria-label="Add"><ToolIcon kind="plus" /></SideButton>
          <SideDivider />
          <SideButton aria-label="Hide sidebar"><ToolIcon kind="panel" /></SideButton>
          <SideButton aria-label="Settings"><ToolIcon kind="gear" /></SideButton>
        </SideBar>
      </Main>

      <TaskBar>
        <StartButton aria-label="Start"><StartOrb /></StartButton>
        <TaskButton aria-label="File Explorer"><ExplorerIcon /></TaskButton>
        <TaskButton aria-label="Media Player"><MediaIcon /></TaskButton>
        <TaskButton $open aria-label="Edge"><EdgeIcon /></TaskButton>
        <Tray>
          <FlagIcon /><NetworkIcon /><SpeakerIcon />
          <Clock>{"6:53 AM\n10/28/2022"}</Clock>
        </Tray>
        <ShowDesktop aria-label="Show desktop" />
      </TaskBar>
    </Shell>
  );
}
